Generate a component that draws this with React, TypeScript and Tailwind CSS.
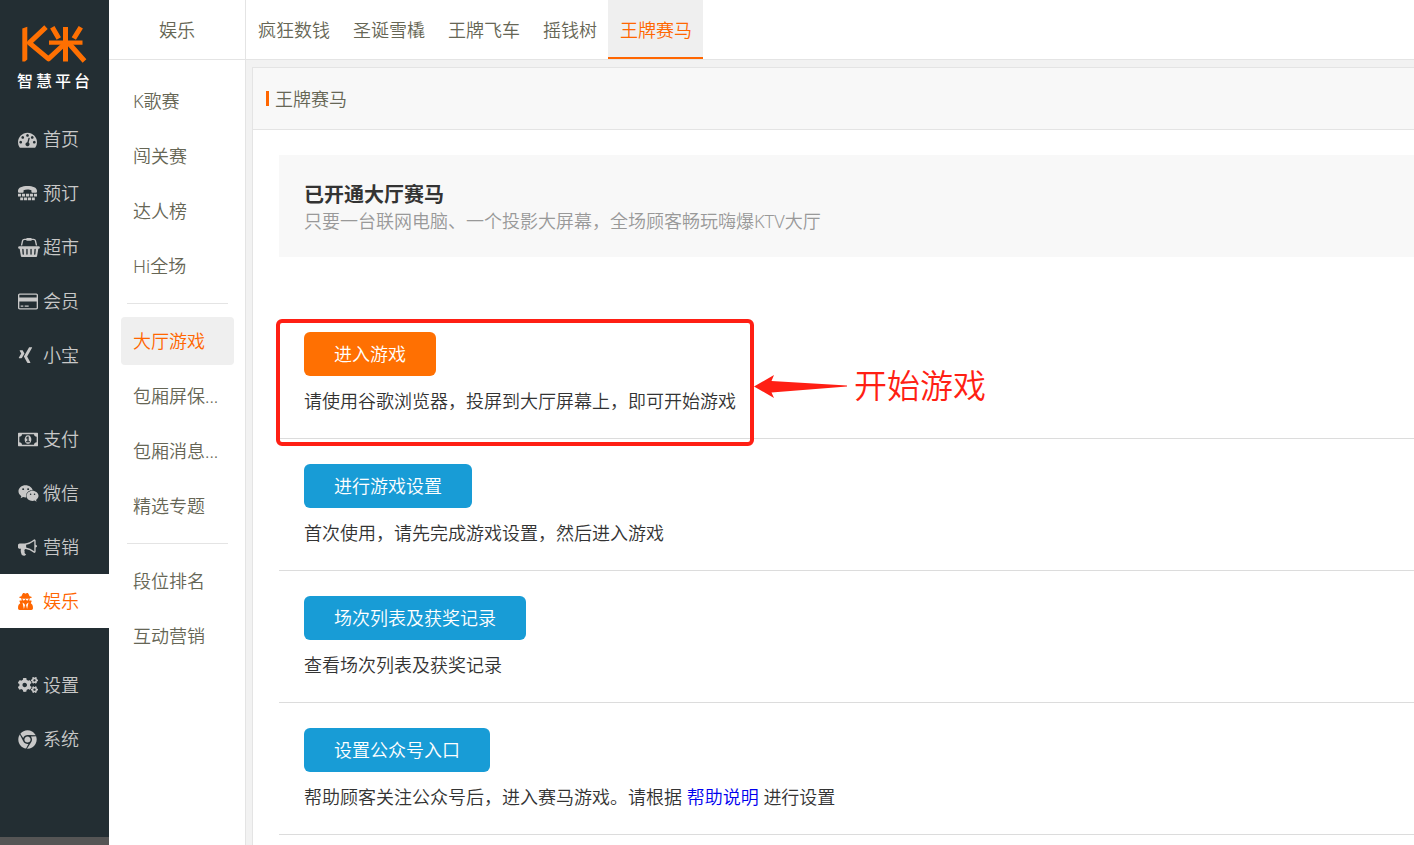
import React from "react";
import { FaChrome, FaCogs, FaUserSecret, FaWeixin, FaXing } from "react-icons/fa";
import clsx from "clsx";

interface GlyphProps {
  width: number;
  className: string;
  d: string;
}

const Glyph: React.FC<GlyphProps> = ({ width, className, d }) => (
  <svg
    viewBox={`0 0 ${width} 1792`}
    className={clsx("h-[19px]", className)}
    fill="currentColor"
    aria-hidden="true"
  >
    <path d={d} />
  </svg>
);

const GaugeIcon = () => (
  <Glyph
    width={1792}
    className="w-[19px]"
    d="M384 1152q0-53-37.5-90.5t-90.5-37.5-90.5 37.5-37.5 90.5 37.5 90.5 90.5 37.5 90.5-37.5 37.5-90.5zm192-448q0-53-37.5-90.5t-90.5-37.5-90.5 37.5-37.5 90.5 37.5 90.5 90.5 37.5 90.5-37.5 37.5-90.5zm428 481l101-382q6-26-7.5-48.5t-38.5-29.5-48 6.5-30 39.5l-101 382q-60 5-107 43.5t-63 98.5q-20 77 20 146t117 89 146-20 89-117q16-60-6-117t-72-91zm660-33q0-53-37.5-90.5t-90.5-37.5-90.5 37.5-37.5 90.5 37.5 90.5 90.5 37.5 90.5-37.5 37.5-90.5zm-640-640q0-53-37.5-90.5t-90.5-37.5-90.5 37.5-37.5 90.5 37.5 90.5 90.5 37.5 90.5-37.5 37.5-90.5zm448 192q0-53-37.5-90.5t-90.5-37.5-90.5 37.5-37.5 90.5 37.5 90.5 90.5 37.5 90.5-37.5 37.5-90.5zm320 448q0 261-141 483-19 29-54 29h-1402q-35 0-54-29-141-221-141-483 0-182 71-348t191-286 286-191 348-71 348 71 286 191 191 286 71 348z"
  />
);

const PhoneKeysIcon = () => (
  <svg viewBox="0 0 19 19" className="h-[19px] w-[19px]" fill="currentColor" aria-hidden="true">
    <path d="M0 6.800C0 3.600 4.200 2 9.500 2S19 3.600 19 6.800v1c0 .6-.4.900-1 .900h-3.600c-.6 0-1-.3-1-.900V6.300C12.400 5.700 11 5.500 9.500 5.500s-2.900.2-3.900.8v1.500c0 .6-.4.900-1 .900H1c-.6 0-1-.3-1-.900z" />
    <path d="M0 9.700h3.100v2.900H0zM4 9.700h3.100v2.900H4zM8 9.700h3.100v2.900H8zM11.900 9.700H15v2.900h-3.100zM15.900 9.700H19v2.900h-3.100zM2.200 13.400h3v2.900h-3zM6 13.400h3.100v2.900H6zM9.900 13.400H13v2.900H9.900zM13.800 13.400h3v2.900h-3z" />
  </svg>
);

const BasketIcon = () => (
  <Glyph
    width={2048}
    className="w-[22px]"
    d="M1920 768q53 0 90.5 37.5t37.5 90.5-37.5 90.5-90.5 37.5h-15l-115 662q-8 46-44 76t-82 30h-1280q-46 0-82-30t-44-76l-115-662h-15q-53 0-90.5-37.5t-37.5-90.5 37.5-90.5 90.5-37.5h1792zm-1435 800q26-2 43.5-22.5t15.5-46.5l-32-416q-2-26-22.5-43.5t-46.5-15.5-43.5 22.5-15.5 46.5l32 416q2 25 20.5 42t43.5 17h5zm411-64v-416q0-26-19-45t-45-19-45 19-19 45v416q0 26 19 45t45 19 45-19 19-45zm384 0v-416q0-26-19-45t-45-19-45 19-19 45v416q0 26 19 45t45 19 45-19 19-45zm352 5l32-416q2-26-15.5-46.5t-43.5-22.5-46.5 15.5-22.5 43.5l-32 416q-2 26 15.5 46.5t43.5 22.5h5q25 0 43.5-17t20.5-42zm-1156-1217l-93 412h-132l101-441q19-88 89-143.5t160-55.5h167q0-26 19-45t45-19h384q26 0 45 19t19 45h167q90 0 160 55.5t89 143.5l101 441h-132l-93-412q-11-44-45.5-72t-79.5-28h-167q0 26-19 45t-45 19h-384q-26 0-45-19t-19-45h-167q-45 0-79.5 28t-45.5 72z"
  />
);

const CardIcon = () => (
  <Glyph
    width={1920}
    className="w-5"
    d="M1760 128q66 0 113 47t47 113v1216q0 66-47 113t-113 47h-1600q-66 0-113-47t-47-113v-1216q0-66 47-113t113-47h1600zm-1600 128q-13 0-22.5 9.5t-9.5 22.5v224h1664v-224q0-13-9.5-22.5t-22.5-9.5h-1600zm1600 1280q13 0 22.5-9.5t9.5-22.5v-608h-1664v608q0 13 9.5 22.5t22.5 9.5h1600zm-1504-128v-128h256v128h-256zm384 0v-128h384v128h-384z"
  />
);

const MoneyIcon = () => (
  <Glyph
    width={1920}
    className="w-5"
    d="M768 1152h384v-96h-128v-448h-114l-148 137 77 80q42-37 55-57h2v288h-128v96zm512-256q0 70-21 142t-59.5 134-101.5 101-138 39-138-39-101.5-101-59.5-134-21-142 21-142 59.5-134 101.5-101 138-39 138 39 101.5 101 59.5 134 21 142zm512 256v-512q-106 0-181-75t-75-181h-1152q0 106-75 181t-181 75v512q106 0 181 75t75 181h1152q0-106 75-181t181-75zm128-832v1152q0 26-19 45t-45 19h-1792q-26 0-45-19t-19-45v-1152q0-26 19-45t45-19h1792q26 0 45 19t19 45z"
  />
);

const BullhornIcon = () => (
  <Glyph
    width={1792}
    className="w-[19px]"
    d="M1664 640q53 0 90.5 37.5t37.5 90.5-37.5 90.5-90.5 37.5v384q0 52-38 90t-90 38q-417-347-812-380-58 19-91 66t-31 100.5 40 92.5q-20 33-23 65.5t6 58 33.5 55 48 50 61.5 50.5q-29 58-111.5 83t-168.5 11.5-132-55.5q-7-23-29.5-87.5t-32-94.5-23-89-15-101 3.5-98.5 22-110.5h-122q-66 0-113-47t-47-113v-192q0-66 47-113t113-47h480q435 0 896-384 52 0 90 38t38 90v384zm-128 604v-954q-394 302-768 343v270q377 42 768 341z"
  />
);

interface NavItem {
  label: string;
  icon: React.ReactNode;
  active?: boolean;
}

const NAV_GROUPS: NavItem[][] = [
  [
    { label: "首页", icon: <GaugeIcon /> },
    { label: "预订", icon: <PhoneKeysIcon /> },
    { label: "超市", icon: <BasketIcon /> },
    { label: "会员", icon: <CardIcon /> },
    { label: "小宝", icon: <FaXing className="h-[18px] w-[15px]" /> },
  ],
  [
    { label: "支付", icon: <MoneyIcon /> },
    { label: "微信", icon: <FaWeixin className="h-[19px] w-[21px]" /> },
    { label: "营销", icon: <BullhornIcon /> },
    { label: "娱乐", icon: <FaUserSecret className="h-[17px] w-[15px]" />, active: true },
  ],
  [
    { label: "设置", icon: <FaCogs className="h-5 w-5" /> },
    { label: "系统", icon: <FaChrome className="h-[19px] w-[19px]" /> },
  ],
];

const MENU_GROUPS: string[][] = [
  ["K歌赛", "闯关赛", "达人榜", "Hi全场"],
  ["大厅游戏", "包厢屏保...", "包厢消息...", "精选专题"],
  ["段位排名", "互动营销"],
];

const TABS = ["疯狂数钱", "圣诞雪橇", "王牌飞车", "摇钱树", "王牌赛马"];

const Logo = () => (
  <div className="flex flex-col items-center pt-6 pr-[2px]">
    <svg
      viewBox="0 0 68 40"
      className="h-10 w-[68px]"
      fill="none"
      stroke="#ff7002"
      strokeWidth="5"
      role="img"
      aria-label="K米"
    >
      <path d="M2.300 37.400V4.500L7.300 2.800V35.500L5 37.400z" fill="#ff7002" stroke="none" />
      <path d="M26 3.200 9.300 18.800 28.500 34.800 45 19.500" strokeLinejoin="round" />
      <path d="M29 18.700H62.500" strokeWidth="4.200" />
      <path d="M45.500 3V37.500" />
      <path d="M32.300 3.200 38.800 14.500M60.800 3.200 53.800 14.500M49 19.500 64.500 37" />
    </svg>
    <div className="mt-[7px] flex gap-[3px] text-[16px] leading-[20px] font-medium text-white">
      <span>智</span>
      <span>慧</span>
      <span>平</span>
      <span>台</span>
    </div>
  </div>
);

const Sidebar = () => (
  <aside className="flex w-[109px] shrink-0 flex-col bg-[#232e33]">
    <Logo />
    <nav className="mt-[21px] flex flex-1 flex-col gap-[30px]">
      {NAV_GROUPS.map((group, index) => (
        <div key={index}>
          {group.map((item) => (
            <a
              key={item.label}
              href="#"
              className={clsx(
                "flex h-[54px] items-center pl-[18px]",
                item.active ? "bg-white text-[#ff6600]" : "text-[#c8c8c8]"
              )}
            >
              <span className="flex w-[25px] shrink-0">{item.icon}</span>
              {item.label}
            </a>
          ))}
        </div>
      ))}
    </nav>
    <div className="h-2 bg-[#555555]" />
  </aside>
);

const SubMenu = () => (
  <div className="w-[137px] shrink-0 border-r border-[#e4e4e4] bg-white">
    <h2 className="flex h-[60px] items-center justify-center border-b border-[#e4e4e4] font-[350]">
      娱乐
    </h2>
    <nav className="pt-[17px] pr-[11px] pl-3">
      {MENU_GROUPS.map((group, index) => (
        <div key={index}>
          {index > 0 && <hr className="mx-[6px] my-[13px] border-[#e4e4e4]" />}
          <div className="flex flex-col gap-[7px]">
            {group.map((label) => (
              <a
                key={label}
                href="#"
                className={clsx(
                  "flex h-12 items-center rounded pl-3 whitespace-nowrap",
                  label === "大厅游戏" && "bg-[#efefef] text-[#ff6600]"
                )}
              >
                {label}
              </a>
            ))}
          </div>
        </div>
      ))}
    </nav>
  </div>
);

interface ActionRowProps {
  button: string;
  primary?: boolean;
  overlay?: React.ReactNode;
  children: React.ReactNode;
}

const ActionRow: React.FC<ActionRowProps> = ({ button, primary = false, overlay, children }) => (
  <section className="relative border-b border-[#dcdcdc] pt-[25px] pb-6 pl-[25px]">
    <button
      type="button"
      className={clsx(
        "h-11 rounded-md px-[30px] text-white",
        primary ? "bg-[#ff7002]" : "bg-[#189cd6]"
      )}
    >
      {button}
    </button>
    <p className="mt-3 leading-[26px] text-[#333333]">{children}</p>
    {overlay}
  </section>
);

// Red frame, arrow and caption over the first action
const StartHint = () => (
  <div className="pointer-events-none absolute top-3 -left-[3px] flex items-center">
    <div className="h-[127px] w-[478px] rounded-md border-4 border-[#ff1f14]" />
    <div className="flex items-center gap-[6px] pt-[6px]">
      <svg viewBox="0 0 94 26" className="h-[26px] w-[94px]" fill="#ff1f14" aria-hidden="true">
        <path d="M0 13.500 20 2 17.500 8 93 12.500V13.500L17.500 19.500 20 25z" />
      </svg>
      <span className="text-[33px] leading-[40px] text-[#ff1f14]">开始游戏</span>
    </div>
  </div>
);

export default function App() {
  return (
    <div className="flex min-h-screen bg-[#f2f2f2] font-['Noto_Sans','Noto_Sans_CJK_SC',sans-serif] text-[18px] leading-[26px] font-[350] text-[#666655]">
      <Sidebar />
      <SubMenu />
      <div className="flex min-w-0 flex-1 flex-col">
        <nav className="flex h-[60px] border-b border-[#e4e4e4] bg-white">
          {TABS.map((tab) => (
            <a
              key={tab}
              href="#"
              className={clsx(
                "flex items-center border-b-2 pt-[2px] pr-[11px] pl-3 whitespace-nowrap",
                tab === "王牌赛马"
                  ? "border-[#ff6600] bg-[#efefef] text-[#ff6600]"
                  : "border-transparent"
              )}
            >
              {tab}
            </a>
          ))}
        </nav>
        <main className="mt-[7px] ml-[6px] flex-1 border-t border-l border-[#e4e4e4] bg-white">
          <header className="flex h-[62px] items-center gap-[6px] border-b border-[#e4e4e4] bg-[#f8f8f8] pl-[13px]">
            <span className="h-[15px] w-[3px] bg-[#ff6600]" />
            <h1>王牌赛马</h1>
          </header>
          <div className="pt-[25px] pl-[26px]">
            <div className="bg-[#f8f8f8] p-[25px]">
              <h2 className="text-[20px] leading-[30px] font-bold text-[#333333]">
                已开通大厅赛马
              </h2>
              <p className="leading-[22px] text-[#999999]">
                只要一台联网电脑、一个投影大屏幕，全场顾客畅玩嗨爆KTV大厅
              </p>
            </div>
            <div className="mt-[50px]">
              <ActionRow button="进入游戏" primary overlay={<StartHint />}>
                请使用谷歌浏览器，投屏到大厅屏幕上，即可开始游戏
              </ActionRow>
              <ActionRow button="进行游戏设置">首次使用，请先完成游戏设置，然后进入游戏</ActionRow>
              <ActionRow button="场次列表及获奖记录">查看场次列表及获奖记录</ActionRow>
              <ActionRow button="设置公众号入口">
                帮助顾客关注公众号后，进入赛马游戏。请根据{" "}
                <a href="#" className="text-[#0000ee]">
                  帮助说明
                </a>{" "}
                进行设置
              </ActionRow>
            </div>
          </div>
        </main>
      </div>
    </div>
  );
}
